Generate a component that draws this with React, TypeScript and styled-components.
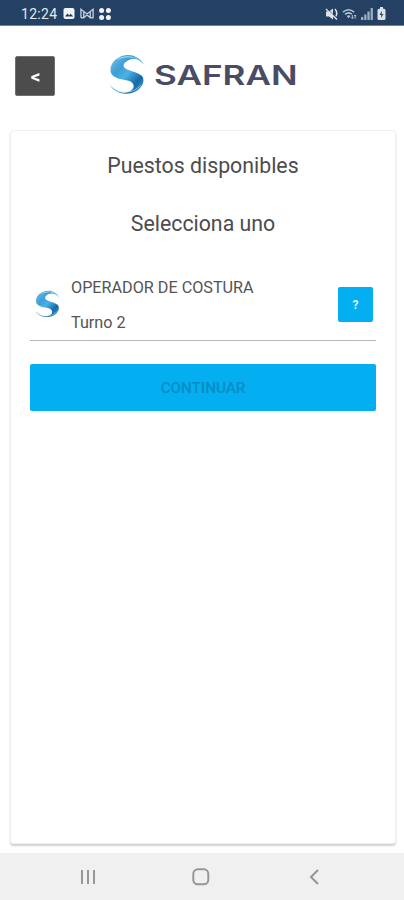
import React from "react";
import styled, { createGlobalStyle } from "styled-components";

const GlobalStyle = createGlobalStyle`
  * { box-sizing: border-box; }
  body { margin: 0; background: #fff; font-family: Roboto, "Liberation Sans", sans-serif; }
`;

const Screen = styled.div`
  width: 404px;
  height: 900px;
  display: flex;
  flex-direction: column;
  background: #fff;
  overflow: hidden;
`;

const StatusBar = styled.div`
  height: 26px;
  flex: none;
  background: #244062;
  border-bottom: 1px solid #6f8198;
  display: flex;
  justify-content: space-between;
  padding: 0 18px 0 21px;
  color: #e3e8ef;
`;

const StatusGroup = styled.div<{ $gap: number }>`
  display: flex;
  align-items: center;
  gap: ${(p) => p.$gap}px;
  padding-top: 2px;
  svg { display: block; }
`;

const Clock = styled.span`
  font-size: 14px;
  line-height: 16px;
  width: 37px;
  white-space: nowrap;
  letter-spacing: 0.3px;
`;

const Header = styled.header`
  height: 104px;
  flex: none;
  display: flex;
  align-items: flex-start;
  padding: 30px 0 0 15px;
`;

const BackButton = styled.button`
  width: 40px;
  height: 40px;
  padding: 1px 0 0 1px;
  border: 1px solid #707070;
  border-radius: 2px;
  background: #4c4c4c;
  color: #fff;
  font: 700 19px Roboto, sans-serif;
`;

const Brand = styled.div`
  display: flex;
  align-items: center;
  gap: 9px;
  margin: -2px 0 0 54px;
`;

const Card = styled.main`
  width: 386px;
  height: 714px;
  margin-left: 10px;
  flex: none;
  border: 1px solid #efefef;
  border-radius: 4px;
  box-shadow: 0 2px 2px rgba(0, 0, 0, 0.19);
  padding: 0 19px;
  display: flex;
  flex-direction: column;
`;

const Heading = styled.h2<{ $top: number }>`
  margin: ${(p) => p.$top}px 0 0;
  font-size: 21.3px;
  line-height: 28px;
  font-weight: 400;
  text-align: center;
  color: #4c4c4c;
`;

const JobRow = styled.div`
  height: 75px;
  margin-top: 28px;
  padding: 0 3px 0 5px;
  display: flex;
  align-items: flex-start;
  border-bottom: 1.5px solid #b5b5b5;
  > svg { margin-top: 24px; flex: none; }
`;

const JobText = styled.div`
  flex: 1;
  margin: 12px 0 0 11px;
  color: #555;
  font-size: 16.2px;
  line-height: 20px;
  display: flex;
  flex-direction: column;
  gap: 15px;
`;

const JobTitle = styled.span`
  white-space: nowrap;
`;

const HelpButton = styled.button`
  width: 35px;
  height: 35px;
  margin-top: 21px;
  padding: 1px 0 0;
  border: 0;
  border-radius: 2px;
  background: #03aff0;
  color: #dff5ff;
  font: 700 12px Roboto, sans-serif;
`;

const ContinueButton = styled.button`
  height: 47px;
  margin-top: 23px;
  padding: 1px 0 0;
  border: 0;
  border-radius: 2px;
  background: #03aff0;
  color: #078cc2;
  font: 500 15.2px Roboto, sans-serif;
`;

const NavBar = styled.nav`
  height: 47px;
  margin-top: auto;
  background: #f0f0f0;
  display: grid;
  grid-template-columns: 113px 116px 11px;
  align-items: center;
  padding: 1px 0 0 79px;
  svg { display: block; }
`;

function Emblem({ id, width, height }: { id: string; width: number; height: number }) {
  return (
    <svg width={width} height={height} viewBox="0 0 36 41" preserveAspectRatio="none">
      <defs>
        <linearGradient id={id} x1="0" y1="0" x2="1" y2="1">
          <stop offset="0" stopColor="#7cc3e8" />
          <stop offset="0.32" stopColor="#3c9fd8" />
          <stop offset="0.5" stopColor="#4bb2e4" />
          <stop offset="0.75" stopColor="#1668a8" />
          <stop offset="1" stopColor="#4ea9d6" />
        </linearGradient>
      </defs>
      <path
        fill={`url(#${id})`}
        d="M34.8 10.8C30.5 4.8 24.5 4 20 6C15.5 8 13.3 11 15.3 13.4C18.8 17 28 17.5 32.8 21.8C36.5 26 33.5 33 28 36.7C19 42.2 6 40 .8 31C7 37.8 15 40 20.5 37.5C25.5 34.8 26.3 30.5 21.5 27.6C16.5 25 8 26 3.6 21.3C-.5 17 1.5 9.5 7 5.2C16-2 29.5 0 34.8 10.8Z"
      />
      <path d="M7 6.2C14 .8 24 1.2 30 5.8C23 2 14 2.8 7 6.2Z" fill="#d3ecf7" opacity=".8" />
      <path d="M5 36C14 40.3 26 38.5 32 31" fill="none" stroke="#c3e4f1" strokeWidth="0.8" opacity=".8" />
    </svg>
  );
}

const ImageIcon = () => (
  <svg width="12" height="11" viewBox="0 0 12 11">
    <rect x="0.5" width="11" height="11" rx="2" fill="#f2f4f7" />
    <path d="M2 8.5L4.5 5.6L6.2 7.3L7.8 5.8L10.2 8.5Z" fill="#244062" />
  </svg>
);

const MailIcon = () => (
  <svg width="14" height="11" viewBox="0 0 15 11" fill="none" stroke="#bdc9d7" strokeWidth="1.5">
    <path d="M1 10V1L7.5 6L14 1V10H11V4M1 10H4V4M4 10L7.5 7L11 10" />
  </svg>
);

const GridIcon = () => (
  <svg width="12" height="12" viewBox="0 0 12 12" fill="#f2f4f7">
    <circle cx="2.6" cy="2.6" r="2.5" />
    <circle cx="9.4" cy="2.6" r="2.5" />
    <circle cx="2.6" cy="9.4" r="2.5" />
    <circle cx="9.4" cy="9.4" r="2.5" />
  </svg>
);

const MuteIcon = () => (
  <svg width="13" height="12" viewBox="0 0 13 12">
    <path d="M1 3.5H4L8 0.5V11.5L4 8.5H1Z" fill="#dce3ea" />
    <path d="M1 1L12 11.5M10 1Q13 4.5 10.8 8.5" stroke="#dce3ea" strokeWidth="1.5" fill="none" />
    <path d="M2.4 1L12.5 10.3" stroke="#244062" strokeWidth=".6" />
  </svg>
);

const WifiIcon = () => (
  <svg width="15" height="12" viewBox="0 0 16 12" fill="none" stroke="#b8c5d4" strokeWidth="1.7">
    <path d="M1 4Q7 -1 13 4M3.2 6.5Q7 3.3 10.5 6.2" />
    <path d="M5 8Q7 6.5 9 8L7 10.5Z" fill="#b8c5d4" stroke="none" />
    <path d="M11 7V11M9.7 9.7L11 11L12.3 9.7M14 11V7M12.8 8.3L14 7L15.2 8.3" strokeWidth="1" />
  </svg>
);

const SignalIcon = () => (
  <svg width="12" height="12" viewBox="0 0 12 12" fill="#9baec2">
    <path d="M0 9H2.3V12H0ZM3.2 6.5H5.5V12H3.2ZM6.4 3.5H8.7V12H6.4ZM9.6 0H11.9V12H9.6Z" />
  </svg>
);

const BatteryIcon = () => (
  <svg width="9" height="13" viewBox="0 0 9 13">
    <path d="M3 0H6V1.7H7Q8.5 1.7 8.5 3.2V11.5Q8.5 13 7 13H2Q.5 13 .5 11.5V3.2Q.5 1.7 2 1.7H3Z" fill="#dbe2e9" />
    <path d="M5 3.8L2.5 8H4.2L4 11L6.5 7H4.8Z" fill="#36506f" />
  </svg>
);

export default function App() {
  return (
    <Screen>
      <GlobalStyle />
      <StatusBar>
        <StatusGroup $gap={5}>
          <Clock>12:24</Clock>
          <ImageIcon />
          <MailIcon />
          <GridIcon />
        </StatusGroup>
        <StatusGroup $gap={4}>
          <MuteIcon />
          <WifiIcon />
          <SignalIcon />
          <BatteryIcon />
        </StatusGroup>
      </StatusBar>
      <Header>
        <BackButton>&lt;</BackButton>
        <Brand>
          <Emblem id="emblem-large" width={36} height={41} />
          <svg width="150" height="36" viewBox="0 0 150 36" overflow="visible">
            <text
              x="0"
              y="28.2"
              textLength="143.5"
              lengthAdjust="spacingAndGlyphs"
              fontFamily="Inter, sans-serif"
              fontWeight="600"
              fontSize="26.5"
              fill="#4a4c66"
            >
              SAFRAN
            </text>
          </svg>
        </Brand>
      </Header>
      <Card>
        <Heading $top={21}>Puestos disponibles</Heading>
        <Heading $top={30}>Selecciona uno</Heading>
        <JobRow>
          <Emblem id="emblem-small" width={25} height={28} />
          <JobText>
            <JobTitle>OPERADOR DE COSTURA</JobTitle>
            <span>Turno 2</span>
          </JobText>
          <HelpButton>?</HelpButton>
        </JobRow>
        <ContinueButton>CONTINUAR</ContinueButton>
      </Card>
      <NavBar>
        <svg width="18" height="16" viewBox="0 0 18 16" stroke="#969696" strokeWidth="2">
          <path d="M3 1V15M9 1V15M15 1V15" />
        </svg>
        <svg width="18" height="18" viewBox="0 0 18 18" fill="none" stroke="#969696" strokeWidth="2">
          <rect x="1.3" y="1.3" width="15" height="15" rx="4.5" />
        </svg>
        <svg width="11" height="16" viewBox="0 0 11 16" fill="none" stroke="#969696" strokeWidth="2">
          <path d="M10 1L3 8L10 15" />
        </svg>
      </NavBar>
    </Screen>
  );
}
